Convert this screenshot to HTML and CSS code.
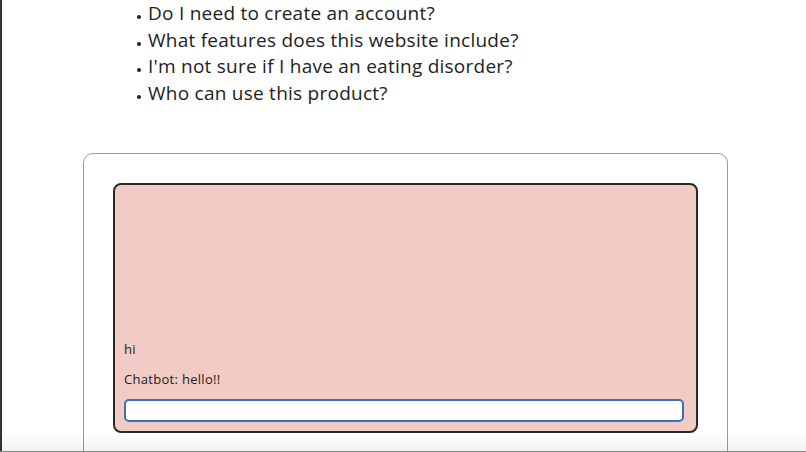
FILE: index.html
```html
<!DOCTYPE html>
<html>
<head>
<meta charset="utf-8">
<link rel="stylesheet" href="styles.css">
</head>
<body>
<div class="page">
  <ul class="faq">
    <li>Do I need to create an account?</li>
    <li>What features does this website include?</li>
    <li>I'm not sure if I have an eating disorder?</li>
    <li>Who can use this product?</li>
  </ul>
  <div class="card">
    <div class="chat">
      <p class="msg">hi</p>
      <p class="msg">Chatbot: hello!!</p>
      <input class="entry" type="text">
    </div>
  </div>
</div>
<div class="fade"></div>
</body>
</html>
```
FILE: styles.css
```css
html, body {
  margin: 0;
  padding: 0;
  height: 452px;
  overflow: hidden;
  background: #fff;
}
body {
  font-family: "Open Sans", "Liberation Sans", sans-serif;
  color: #222;
}
.page {
  border-left: 2px solid #333;
  height: 452px;
  box-sizing: border-box;
}
.faq {
  margin: 0;
  padding: 0 0 0 146px;
  font-size: 19px;
  letter-spacing: 0.25px;
  line-height: 26.5px;
  list-style: none;
}
.faq li {
  position: relative;
}
.faq li::before {
  content: "";
  position: absolute;
  left: -11px;
  top: 15px;
  width: 4px;
  height: 4px;
  border-radius: 50%;
  background: #222;
}
.card {
  margin: 47px 0 0 81px;
  width: 645px;
  height: 320px;
  box-sizing: border-box;
  border: 1px solid #9a9a9a;
  border-radius: 10px;
  padding: 29px 29px;
}
.chat {
  height: 250px;
  box-sizing: border-box;
  border: 2px solid #2a2a2a;
  border-radius: 8px;
  background: #f1cbc4;
  display: flex;
  flex-direction: column;
  justify-content: flex-end;
  padding: 0 12px 9px 9px;
}
.msg {
  margin: 0 0 16px 0;
  font-size: 13px;
  letter-spacing: 0.3px;
  line-height: 14px;
}
.msg + .msg {
  margin-bottom: 13px;
}
.entry {
  height: 23px;
  box-sizing: border-box;
  border: 2px solid #3a6fc2;
  border-radius: 5px;
  background: #fff;
  outline: none;
  width: 100%;
}
.fade {
  position: fixed;
  left: 0;
  right: 0;
  bottom: 0;
  height: 20px;
  background: linear-gradient(to bottom, rgba(0,0,0,0), rgba(0,0,0,0.05));
  border-bottom: 1px solid #888;
}
```
